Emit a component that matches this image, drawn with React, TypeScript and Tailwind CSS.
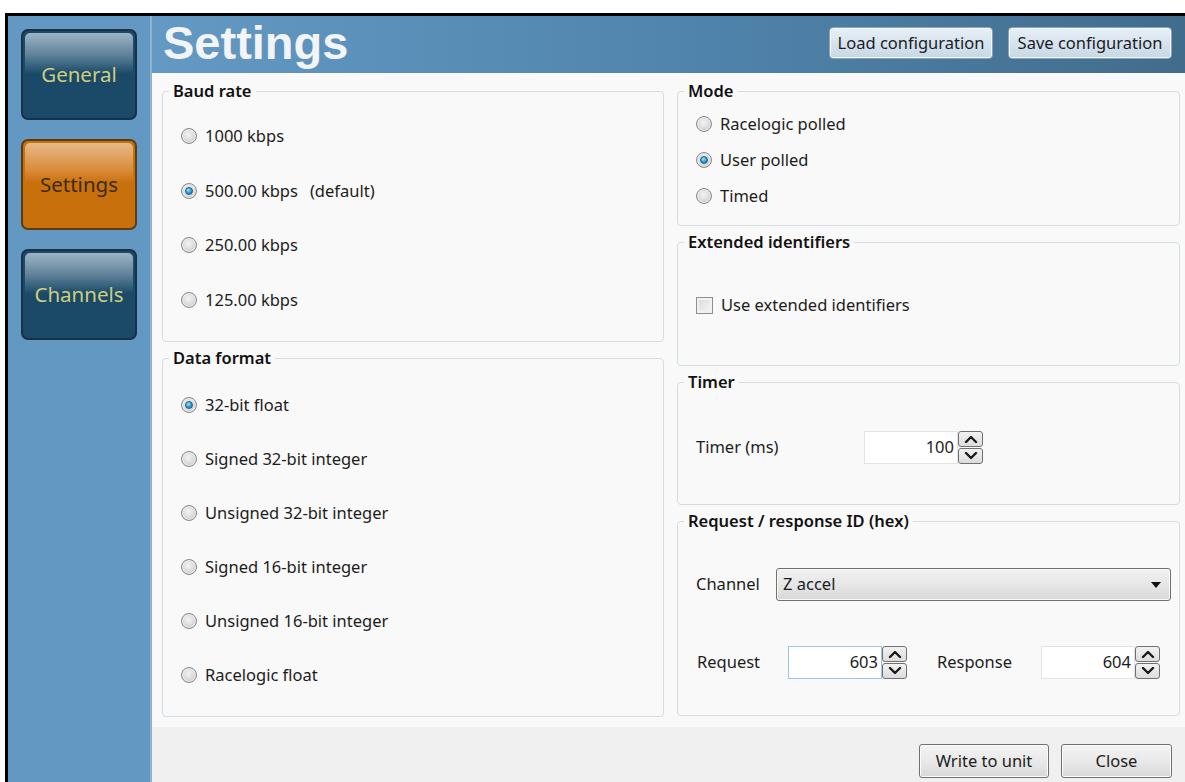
import React from "react";

const FONT = { fontFamily: '"Noto Sans", "Open Sans", "Liberation Sans", sans-serif' };

function Radio({ checked }: { checked?: boolean }) {
  return (
    <span className="relative flex h-[16px] w-[16px] shrink-0 items-center justify-center rounded-full border border-[#86888a] bg-[radial-gradient(circle_at_45%_40%,#f3f3f3_0%,#dcdcdc_50%,#b3b5b7_100%)] shadow-[inset_0_0_0_1px_#ececec]">
      {checked && (
        <span className="h-[8px] w-[8px] rounded-full border border-[#1b5f86] bg-[radial-gradient(circle_at_40%_35%,#a8e4ff_0%,#2e9fd6_50%,#176c9c_100%)]" />
      )}
    </span>
  );
}

function RadioRow({ label, checked, extra }: { label: string; checked?: boolean; extra?: string }) {
  return (
    <div className="flex items-center gap-[8px] text-[16.5px] leading-[22px] text-[#1c1c1c]">
      <Radio checked={checked} />
      <span>
        {label}
        {extra && <span className="ml-[12px]">{extra}</span>}
      </span>
    </div>
  );
}

function Group({ title, className, children }: { title: string; className: string; children?: React.ReactNode }) {
  return (
    <div className={`relative rounded-[4px] border border-[#d3dde4] ${className}`}>
      <div className="absolute left-[6px] top-[-12px] bg-[#f9f9f9] px-[4px] text-[16.5px] font-semibold leading-[22px] text-[#111]">
        {title}
      </div>
      {children}
    </div>
  );
}

function Chevron({ up }: { up?: boolean }) {
  return (
    <svg width="14" height="8" viewBox="0 0 14 8">
      <polyline
        points={up ? "2,7 7,2 12,7" : "2,1 7,6 12,1"}
        fill="none"
        stroke="#1b1b1b"
        strokeWidth="2.4"
        strokeLinecap="round"
        strokeLinejoin="round"
      />
    </svg>
  );
}

function Spin({ value, width, focused }: { value: string; width: string; focused?: boolean }) {
  return (
    <div className="flex items-center">
      <div
        className={`flex h-[33px] ${width} items-center justify-end border bg-white pr-[3px] text-[16.5px] text-[#1c1c1c] ${
          focused ? "border-[#9fc3e2]" : "border-[#e2e3ea]"
        }`}
      >
        {value}
      </div>
      <div className="flex w-[25px] flex-col gap-[1px]">
        <div className="flex h-[16px] items-center justify-center rounded-[3px] border border-[#707070] bg-[linear-gradient(#f2f2f2,#dcdcdc)]">
          <Chevron up />
        </div>
        <div className="flex h-[16px] items-center justify-center rounded-[3px] border border-[#707070] bg-[linear-gradient(#f2f2f2,#dcdcdc)]">
          <Chevron />
        </div>
      </div>
    </div>
  );
}

function SideButton({ label, active }: { label: string; active?: boolean }) {
  return (
    <div
      className={`relative h-[91px] w-[116px] overflow-hidden rounded-[7px] border-2 ${
        active ? "border-[#5c3c14] bg-[#c8700c]" : "border-[#193247] bg-[#1b4a68]"
      }`}
    >
      <div
        className={`absolute left-[2px] right-[2px] top-[2px] h-[40px] rounded-t-[5px] ${
          active
            ? "bg-[linear-gradient(#e8b98a,#d88a36_70%,#c8700c)]"
            : "bg-[linear-gradient(#9db5c5,#5f8199_55%,#1d4c6a)]"
        }`}
      />
      <div
        className={`relative flex h-full items-center justify-center text-[20.5px] ${
          active ? "text-[#3a2b12]" : "text-[#cfcd80]"
        }`}
      >
        {label}
      </div>
    </div>
  );
}

function TopButton({ label }: { label: string }) {
  return (
    <div className="flex h-[32px] w-[164px] items-center justify-center rounded-[4px] border border-[#8ba3b8] bg-[linear-gradient(#e8f0f7,#d6e3ee_50%,#c7d8e6)] text-[16.5px] text-[#1c1c1c] shadow-[inset_0_0_0_1px_#f3f8fc]">
      {label}
    </div>
  );
}

function FootButton({ label, width }: { label: string; width: string }) {
  return (
    <div
      className={`flex h-[34px] ${width} items-center justify-center rounded-[3px] border border-[#707070] bg-[linear-gradient(#f4f4f4,#e9e9e9_50%,#d9d9d9)] text-[16.5px] text-[#1c1c1c] shadow-[inset_0_0_0_1px_#fcfcfc]`}
    >
      {label}
    </div>
  );
}

export default function App() {
  return (
    <div className="h-[782px] w-[1185px] overflow-hidden bg-white pl-[5px] pt-[13px]" style={FONT}>
      <div className="flex h-[769px] border-l-[3px] border-t-[3px] border-black">
        {/* navigation column */}
        <div className="flex w-[142px] shrink-0 flex-col gap-[19px] bg-[#6298c2] pl-[13px] pt-[13px]">
          <SideButton label="General" />
          <SideButton label="Settings" active />
          <SideButton label="Channels" />
        </div>

        <div className="flex min-w-0 flex-1 flex-col border-l-2 border-l-[#8db3d2]">
          {/* header */}
          <div className="flex h-[57px] shrink-0 items-start justify-between bg-[linear-gradient(90deg,#6399c3,#5185ae_50%,#426c8c)] pl-[11px] pr-[13px]">
            <div className="mt-[1px] text-[47px] font-bold leading-[52px] text-[#f2f4f6]" style={{ fontFamily: '"Liberation Sans", Arial, sans-serif' }}>
              Settings
            </div>
            <div className="mt-[11px] flex gap-[15px]">
              <TopButton label="Load configuration" />
              <TopButton label="Save configuration" />
            </div>
          </div>

          {/* settings body */}
          <div className="flex h-[654px] shrink-0 gap-[13px] bg-[#f9f9f9] pl-[10px] pr-[5px] pt-[18px]">
            <div className="flex w-[502px] flex-col gap-[16px]">
              <Group title="Baud rate" className="h-[251px]">
                <div className="flex flex-col gap-[32.5px] pl-[18px] pt-[33px]">
                  <RadioRow label="1000 kbps" />
                  <RadioRow label="500.00 kbps" extra="(default)" checked />
                  <RadioRow label="250.00 kbps" />
                  <RadioRow label="125.00 kbps" />
                </div>
              </Group>
              <Group title="Data format" className="h-[359px]">
                <div className="flex flex-col gap-[32px] pl-[18px] pt-[35px]">
                  <RadioRow label="32-bit float" checked />
                  <RadioRow label="Signed 32-bit integer" />
                  <RadioRow label="Unsigned 32-bit integer" />
                  <RadioRow label="Signed 16-bit integer" />
                  <RadioRow label="Unsigned 16-bit integer" />
                  <RadioRow label="Racelogic float" />
                </div>
              </Group>
            </div>

            <div className="flex w-[503px] flex-col gap-[16px]">
              <Group title="Mode" className="h-[135px]">
                <div className="flex flex-col gap-[14px] pl-[18px] pt-[21px]">
                  <RadioRow label="Racelogic polled" />
                  <RadioRow label="User polled" checked />
                  <RadioRow label="Timed" />
                </div>
              </Group>
              <Group title="Extended identifiers" className="h-[124px]">
                <div className="flex items-center gap-[8px] pl-[18px] pt-[51px] text-[16.5px] leading-[22px] text-[#1c1c1c]">
                  <span className="h-[17px] w-[17px] border border-[#8e8f8f] bg-[linear-gradient(135deg,#d9d9d9,#f6f6f6)] shadow-[inset_0_0_0_2px_#f1f1f1]" />
                  <span>Use extended identifiers</span>
                </div>
              </Group>
              <Group title="Timer" className="h-[123px]">
                <div className="flex items-center pl-[18px] pt-[48px] text-[16.5px] text-[#1c1c1c]">
                  <span className="w-[168px]">Timer (ms)</span>
                  <Spin value="100" width="w-[94px]" />
                </div>
              </Group>
              <Group title="Request / response ID (hex)" className="h-[195px]">
                <div className="flex items-center pl-[18px] pr-[8px] pt-[46px] text-[16.5px] text-[#1c1c1c]">
                  <span className="w-[80px]">Channel</span>
                  <div className="flex h-[33px] flex-1 items-center justify-between rounded-[3px] border border-[#707070] bg-[linear-gradient(#f2f2f2,#e6e6e6_50%,#d8d8d8)] pl-[6px] pr-[9px] shadow-[inset_0_0_0_1px_#fafafa]">
                    <span>Z accel</span>
                    <svg width="10" height="6" viewBox="0 0 10 6">
                      <polygon points="0,0 10,0 5,6" fill="#111" />
                    </svg>
                  </div>
                </div>
                <div className="flex items-center pl-[19px] pt-[45px] text-[16.5px] text-[#1c1c1c]">
                  <span className="w-[91px]">Request</span>
                  <Spin value="603" width="w-[94px]" focused />
                  <span className="ml-[30px] w-[104px]">Response</span>
                  <Spin value="604" width="w-[94px]" />
                </div>
              </Group>
            </div>
          </div>

          {/* footer */}
          <div className="flex flex-1 items-start justify-end gap-[12px] bg-[#f0f0f0] pr-[13px] pt-[17px]">
            <FootButton label="Write to unit" width="w-[130px]" />
            <FootButton label="Close" width="w-[111px]" />
          </div>
        </div>
      </div>
    </div>
  );
}
